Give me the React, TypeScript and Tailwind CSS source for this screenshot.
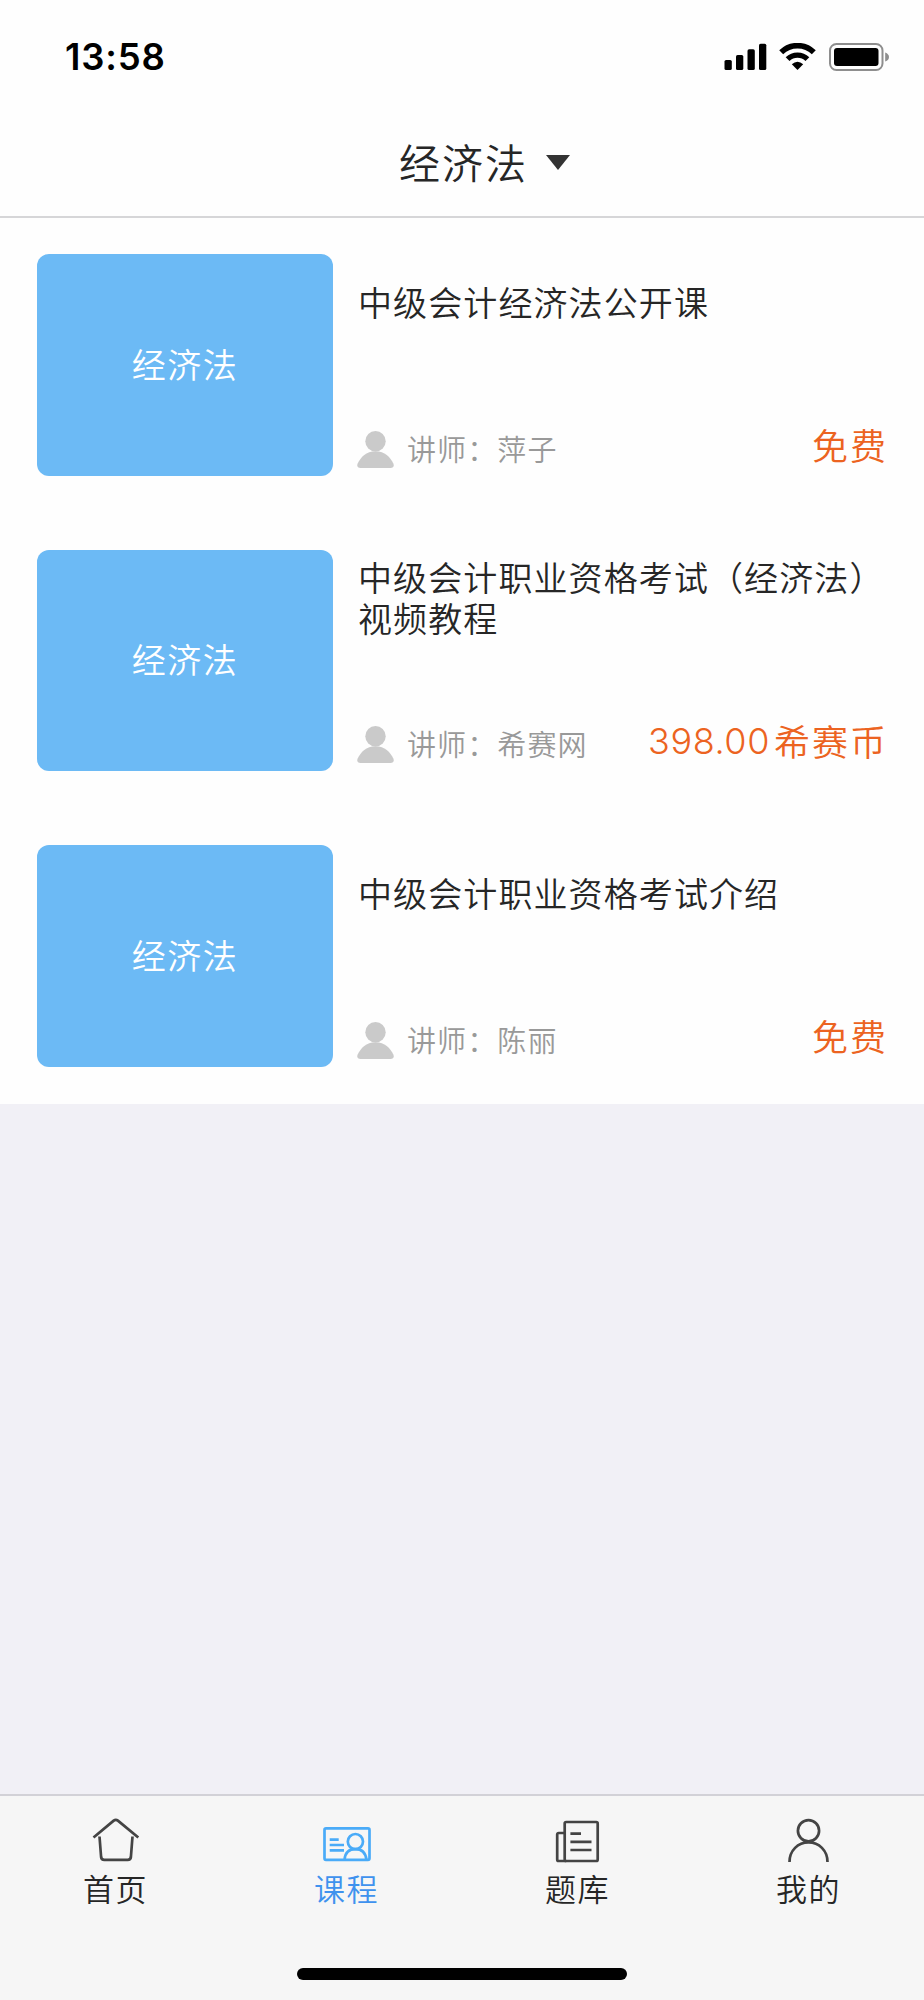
import React, { useState } from 'react';

interface Course {
  id: number;
  title: string;
  teacher: string;
  price: number;
}

interface TabItem {
  key: string;
  label: string;
  icon: React.ReactNode;
}

const subject = '经济法';

const courses: Course[] = [
  { id: 1, title: '中级会计经济法公开课', teacher: '萍子', price: 0 },
  { id: 2, title: '中级会计职业资格考试（经济法）视频教程', teacher: '希赛网', price: 398 },
  { id: 3, title: '中级会计职业资格考试介绍', teacher: '陈丽', price: 0 },
];

const tabs: TabItem[] = [
  {
    key: 'home',
    label: '首页',
    icon: (
      <>
        <path d="M1.5 21.5 L21.7 4.6 Q23.8 3 25.9 4.6 L46.3 21.5" />
        <path d="M7.5 20.5 L9.1 41 Q9.4 43.9 12.3 43.9 H35.7 Q38.6 43.9 38.9 41 L40.5 20.5" />
      </>
    ),
  },
  {
    key: 'course',
    label: '课程',
    icon: (
      <>
        <rect x="1.5" y="12.4" width="45" height="31.4" rx="1.5" />
        <path d="M6.7 23.7 H15.7 M6.7 29 H21 M6.7 34.4 H21" />
        <circle cx="32.4" cy="25.6" r="7.6" />
        <path d="M21.6 43.5 C22.1 37.5 25.6 33.2 32.4 33.2 C39.1 33.2 42.6 37.5 43.4 43.5" />
      </>
    ),
  },
  {
    key: 'bank',
    label: '题库',
    icon: (
      <>
        <rect x="10.7" y="6" width="33" height="39" rx="1.5" />
        <path d="M10.7 17 H4.7 Q3.2 17 3.2 18.5 V43.5 Q3.2 45 4.7 45 H12.2" />
        <path d="M16.4 17.7 H27 M16.4 25.8 H37.5 M16.4 34 H37.5" />
      </>
    ),
  },
  {
    key: 'mine',
    label: '我的',
    icon: (
      <>
        <circle cx="23.5" cy="14.8" r="10.6" />
        <path d="M4.5 46 C4.5 34.5 13 26.4 23.5 26.4 C34 26.4 42.5 34.5 42.5 46" />
      </>
    ),
  },
];

const StatusBar: React.FC = () => (
  <div className="flex h-[114px] items-center justify-between pl-[65px] pr-[34px]">
    <span className="font-['Inter'] text-[36.5px] font-semibold leading-none tracking-[0.8px] text-black">13:58</span>
    <div className="flex items-center">
      <svg width="43" height="28" viewBox="0 0 43 28" className="mr-[12px]">
        <rect x="0.5" y="17" width="7.3" height="10" rx="1.6" />
        <rect x="12" y="12" width="7.3" height="15" rx="1.6" />
        <rect x="23.5" y="6.3" width="7.3" height="20.7" rx="1.6" />
        <rect x="35" y="0.7" width="7.3" height="26.3" rx="1.6" />
      </svg>
      <svg width="37" height="28" viewBox="0 0 37 28" className="mr-[13px]">
        <path d="M2.2 9.3 A23.2 23.2 0 0 1 34.8 9.3" fill="none" stroke="#000" strokeWidth="5.6" />
        <path d="M8.6 16.2 A14 14 0 0 1 28.4 16.2" fill="none" stroke="#000" strokeWidth="5.4" />
        <path d="M18.5 27 L12.8 21.3 Q18.5 16.3 24.2 21.3 Z" />
      </svg>
      <svg width="61" height="28" viewBox="0 0 61 28">
        <rect x="1" y="1" width="52.5" height="26" rx="6.5" fill="none" stroke="#8e8e8e" strokeWidth="2" />
        <rect x="5" y="5" width="44.5" height="18" rx="3" />
        <path d="M56.2 9.5 Q60 11 60 14 Q60 17 56.2 18.5 Z" fill="#8e8e8e" />
      </svg>
    </div>
  </div>
);

const CourseRow: React.FC<{ course: Course }> = ({ course }) => (
  <div className="flex h-[295.5px] pl-[37px] pr-[38px] pt-[36px]">
    <div className="flex h-[221.5px] w-[296px] shrink-0 items-center justify-center rounded-[12px] bg-[#6cbaf5] pb-[2px] text-[34px] leading-[40px] tracking-[1.5px] text-white">
      {subject}
    </div>
    <div className="ml-[24px] flex h-[222px] flex-1 flex-col">
      <div className="flex h-[94px] items-center">
        <h2 className="-mr-[20px] ml-px text-[34px] leading-[41px] tracking-[1.1px] text-[#262626]">
          {course.title}
        </h2>
      </div>
      <div className="mt-auto flex h-[54px] items-center">
        <svg width="37" height="37" viewBox="0 0 37 37" fill="#cacaca">
          <circle cx="18.5" cy="10.2" r="10.2" />
          <path d="M18.5 20.3 C28 20.3 33 26 36.5 32.8 Q37.5 37 33.5 37 H3.5 Q-0.5 37 0.5 32.8 C4 26 9 20.3 18.5 20.3 Z" />
        </svg>
        <span className="ml-[13px] pb-[3px] text-[29px] leading-[40px] tracking-[1.1px] text-[#999]">
          讲师：{course.teacher}
        </span>
        <span className="ml-auto flex items-center pb-[10px] text-[36px] leading-[40px] text-[#ec6321]">
          {course.price > 0 ? (
            <>
              <span className="mr-[4px] pt-[3px] font-['Inter'] tracking-[0.6px]">{course.price.toFixed(2)}</span>
              <span className="-mr-[2px] tracking-[2px]">希赛币</span>
            </>
          ) : (
            <span className="-mr-[2px] tracking-[2px]">免费</span>
          )}
        </span>
      </div>
    </div>
  </div>
);

const App: React.FC = () => {
  const [active, setActive] = useState('course');

  return (
    <div className="flex h-[2000px] w-[924px] flex-col bg-[#f1f0f6] font-['Noto_Sans_CJK_SC',sans-serif] font-[350]">
      <header className="flex h-[218px] flex-col border-b-2 border-[#d6d6d8] bg-[#fefefe]">
        <StatusBar />
        <button className="flex flex-1 items-center pb-[6px] pl-[399px]">
          <span className="pb-[2px] text-[41px] leading-[50px] tracking-[2px] text-[#262626]">{subject}</span>
          <svg width="24" height="15" viewBox="0 0 24 15" className="ml-[18px]" fill="#333">
            <path d="M0 0 H24 L12 15 Z" />
          </svg>
        </button>
      </header>

      <main className="h-[885.5px] overflow-hidden bg-[#fefefe]">
        {courses.map((course) => (
          <CourseRow key={course.id} course={course} />
        ))}
      </main>

      <footer className="mt-auto flex h-[206px] flex-col border-t-2 border-[#d2d1d7] bg-[#f6f6f6]">
        <nav className="grid grid-cols-4 pt-[20px]">
          {tabs.map((tab) => (
            <button key={tab.key} onClick={() => setActive(tab.key)} className="flex flex-col items-center">
              <svg
                width="48"
                height="48"
                viewBox="0 0 48 48"
                fill="none"
                strokeWidth="2.7"
                className={active === tab.key ? 'stroke-[#4aabf8]' : 'stroke-[#444]'}
              >
                {tab.icon}
              </svg>
              <span
                className={
                  active === tab.key
                    ? 'mt-[4px] text-[31px] leading-[40px] tracking-[1.5px] text-[#3f92ee]'
                    : 'mt-[4px] text-[31px] leading-[40px] tracking-[1.5px] text-[#262626]'
                }
              >
                {tab.label}
              </span>
            </button>
          ))}
        </nav>
        <div className="mx-auto mb-[20px] mt-auto h-[12px] w-[330px] rounded-full bg-black" />
      </footer>
    </div>
  );
};

export default App;
